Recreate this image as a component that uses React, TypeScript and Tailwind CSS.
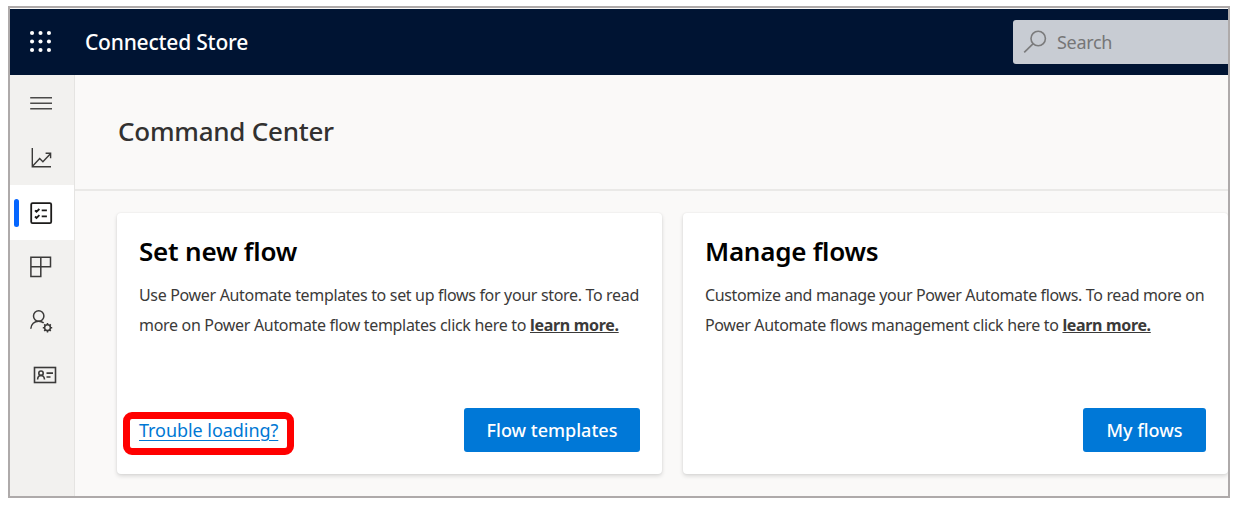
import type { ReactNode } from "react";

function NavItem({ children, active = false, className = "" }: { children: ReactNode; active?: boolean; className?: string }) {
  return (
    <a
      href="#"
      className={`flex w-16 shrink-0 items-center ${active ? "h-[55px] bg-white" : "h-[54.5px]"} ${className}`}
    >
      <span className={`ml-1 h-7 w-[5px] rounded-full ${active ? "bg-[#0566ff]" : ""}`} />
      <span className="ml-2.5">{children}</span>
    </a>
  );
}

function Waffle() {
  const steps = [2, 10.25, 18.5];
  return (
    <svg width="21" height="21" viewBox="0 0 20.5 20.5" fill="#fff" className="-mt-px">
      {steps.map((y) => steps.map((x) => <circle key={`${x}-${y}`} cx={x} cy={y} r="2" />))}
    </svg>
  );
}

function MenuIcon() {
  return (
    <svg width="24" height="24" fill="none" stroke="#4b4a49" strokeWidth="1.5">
      <path d="M1.2 6.7h21.800M1.200 12.200h21.800M1.200 17.700h21.800" />
    </svg>
  );
}

function ChartIcon() {
  return (
    <svg width="24" height="24" fill="none" stroke="#3b3a39" strokeWidth="1.4">
      <path d="M3.300 2v18.800H22M3.500 20.300l7.200-7.800 3.200 3.200 7.300-7.800M16.600 7.200h5v5" />
    </svg>
  );
}

function TasksIcon() {
  return (
    <svg width="24" height="24" fill="none" stroke="#1b1a19" strokeWidth="1.8">
      <rect x="2.200" y="2.200" width="20" height="20" rx="1.400" />
      <path d="M6 9.300l1.500 1.400L10.400 8M6 15.500l1.500 1.400 2.900-2.700M12.700 9.300h5.200M12.700 15.400h5.200" />
    </svg>
  );
}

function TilesIcon() {
  return (
    <svg width="24" height="24" fill="none" stroke="#3b3a39" strokeWidth="1.5">
      <path d="M1.900 2.200h19.600v9.600H11.800v9.800H1.900zM11.800 2.200v9.600H1.900" />
    </svg>
  );
}

function PersonGearIcon() {
  return (
    <svg width="26" height="26" viewBox="0 0 26 26" fill="none" stroke="#3b3a39" strokeWidth="1.5">
      <circle cx="9.700" cy="7" r="5.200" />
      <path d="M1.800 19.800c.2-4.500 3.600-7.600 7.900-7.600 2 0 3.700.7 5 1.700" />
      <circle cx="18.500" cy="18.700" r="2.900" />
      <path d="M18.500 15.800v-1.800M18.500 21.600v1.800M15.600 18.700h-1.800M21.400 18.700h1.800M16.500 16.700l-1.300-1.300M20.500 20.700l1.300 1.300M16.500 20.700l-1.300 1.300M20.500 16.700l1.300-1.300" />
    </svg>
  );
}

function ContactIcon() {
  return (
    <svg width="24" height="24" fill="none" stroke="#3b3a39" strokeWidth="1.6">
      <rect x="1.500" y="4.500" width="21" height="15" />
      <circle cx="8" cy="10.200" r="2.200" />
      <path d="M4.600 16.500c.1-2.500 1.300-4 3.400-4s3.300 1.500 3.500 4M13.500 10.100h6.500M13.500 14h4" />
    </svg>
  );
}

function SearchIcon() {
  return (
    <svg width="24" height="24" fill="none" stroke="#7b7b7c" strokeWidth="1.600">
      <circle cx="15.200" cy="8.500" r="7.200" />
      <path d="M10.200 13.600L1.200 22.400" />
    </svg>
  );
}

function FlowCard({ title, lines, titleClass, children }: { title: string; lines: ReactNode; titleClass: string; children: ReactNode }) {
  return (
    <section className="flex h-[261px] w-[545px] shrink-0 flex-col rounded-[4px] bg-white px-[22px] pt-5 pb-[22px] shadow-[0_2px_4px_rgba(0,0,0,0.14),0_0_2px_rgba(0,0,0,0.07)]">
      <h2 className={`h-9 font-semibold whitespace-nowrap text-black ${titleClass}`}>{title}</h2>
      <div className="mt-[11px] whitespace-nowrap text-[#3b3a39]">{lines}</div>
      <div className="mt-auto flex h-11 items-center">{children}</div>
    </section>
  );
}

export default function App() {
  return (
    <div className="h-[506px] w-[1238px] bg-white pt-[6px] pl-2 font-['Noto_Sans','Open_Sans',sans-serif]">
      <div className="flex h-[492px] w-[1222px] flex-col overflow-hidden border-2 border-[#aeaaaa] bg-[#faf9f8] pt-px">
        <header className="flex h-[66px] shrink-0 items-center bg-[#001433] pl-5">
          <Waffle />
          <span className="ml-[34px] text-[21px] leading-[30px] font-medium tracking-[-0.22px] whitespace-nowrap text-white">Connected Store</span>
          <div className="ml-auto flex h-11 w-[215px] items-center rounded-l-[3px] bg-[#c8ccd3] pl-[10px]">
            <SearchIcon />
            <span className="ml-[10px] text-[18px] tracking-[-0.3px] text-[#767677]">Search</span>
          </div>
        </header>
        <div className="flex min-h-0 flex-1">
          <nav className="flex w-[65px] shrink-0 flex-col border-r border-[#e5e4e2] bg-[#f2f1ef] pt-px">
            <NavItem><MenuIcon /></NavItem>
            <NavItem><ChartIcon /></NavItem>
            <NavItem active><TasksIcon /></NavItem>
            <NavItem><TilesIcon /></NavItem>
            <NavItem><PersonGearIcon /></NavItem>
            <NavItem className="pb-[2px] pl-1"><ContactIcon /></NavItem>
          </nav>
          <main className="min-w-0 flex-1">
            <div className="flex h-[116px] items-center border-b-2 border-[#eae9e7] pb-[2px] pl-[43px]">
              <h1 className="text-[26px] leading-9 font-[550] tracking-[-0.25px] whitespace-nowrap text-[#323130]">Command Center</h1>
            </div>
            <div className="flex gap-[21px] pt-[22px] pl-[42px]">
              <FlowCard
                title="Set new flow"
                titleClass="text-[26px] leading-9 tracking-[-0.2px]"
                lines={
                  <>
                    <p className="text-[16px] leading-[30px] tracking-[-0.33px]">Use Power Automate templates to set up flows for your store. To read</p>
                    <p className="text-[16px] leading-[30px] tracking-[-0.31px]">
                      more on Power Automate flow templates click here to <a href="#" className="font-bold underline">learn more.</a>
                    </p>
                  </>
                }
              >
                <a href="#" className="relative text-[18px] leading-7 tracking-[-0.05px] whitespace-nowrap text-[#0078d4] underline decoration-1 underline-offset-[3px]">
                  Trouble loading?
                  <span className="absolute -top-[4px] -left-4 h-[43px] w-[171px] rounded-[9px] border-[7px] border-[#ff0000]" />
                </a>
                <button className="ml-auto h-11 w-[176px] rounded-[3px] bg-[#0078d7] text-[18px] font-medium whitespace-nowrap text-white">Flow templates</button>
              </FlowCard>
              <FlowCard
                title="Manage flows"
                titleClass="text-[26px] leading-9 tracking-[-0.25px]"
                lines={
                  <>
                    <p className="text-[16px] leading-[30px] tracking-[-0.35px]">Customize and manage your Power Automate flows. To read more on</p>
                    <p className="text-[16px] leading-[30px] tracking-[-0.34px]">
                      Power Automate flows management click here to <a href="#" className="font-bold underline">learn more.</a>
                    </p>
                  </>
                }
              >
                <button className="ml-auto h-11 w-[123px] rounded-[3px] bg-[#0078d7] text-[18px] font-medium whitespace-nowrap text-white">My flows</button>
              </FlowCard>
            </div>
          </main>
        </div>
      </div>
    </div>
  );
}
